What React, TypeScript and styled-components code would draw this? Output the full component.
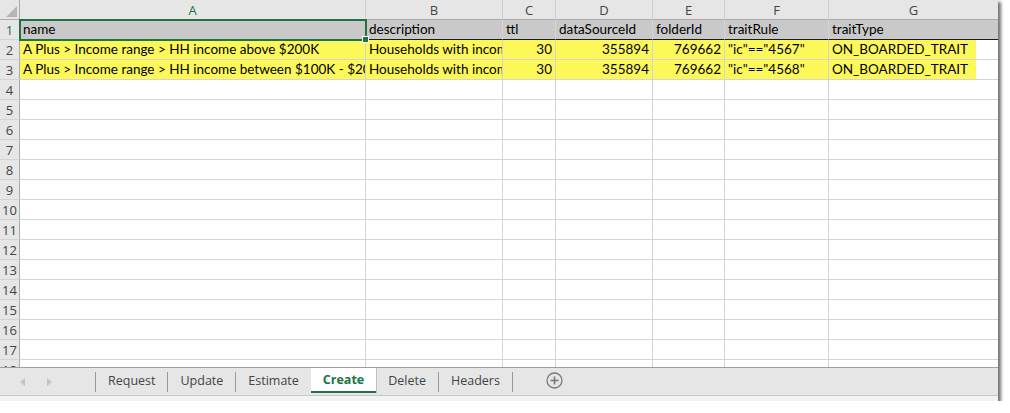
import React from "react";
import styled, { createGlobalStyle, css } from "styled-components";

const GlobalStyle = createGlobalStyle`
  html, body { margin: 0; padding: 0; background: #ffffff; }
  body { font-family: Lato, "Liberation Sans", sans-serif; }
`;

const GRID = "20px 346px 137px 53px 97px 72px 104px 169px";

const Sheet = styled.div`
  position: relative;
  width: 998px;
  height: 401px;
  display: flex;
  flex-direction: column;
  background: #ffffff;
  box-shadow: 3px 2px 3px rgba(0, 0, 0, 0.55);
  overflow: hidden;
`;

const GridArea = styled.div`
  position: relative;
  height: 367px;
  overflow: hidden;
  flex: none;
`;

const Row = styled.div`
  display: grid;
  grid-template-columns: ${GRID};
  height: 20px;
`;

const ColHead = styled.div<{ $active?: boolean }>`
  box-sizing: border-box;
  height: 20px;
  background: #e6e6e6;
  border-right: 1px solid #cdcdcd;
  border-bottom: 1px solid #ababab;
  display: flex;
  align-items: center;
  justify-content: center;
  font-family: "Open Sans", "Noto Sans", sans-serif;
  font-size: 13px;
  color: ${(p) => (p.$active ? "#217346" : "#444444")};
  &:last-child { border-right: none; }
`;

const Corner = styled.div`
  box-sizing: border-box;
  height: 20px;
  background: #e6e6e6;
  border-right: 1px solid #ababab;
  border-bottom: 1px solid #ababab;
  display: flex;
  align-items: flex-end;
  justify-content: flex-end;
  padding: 0 2px 2px 0;
`;

const RowHead = styled.div<{ $active?: boolean }>`
  box-sizing: border-box;
  background: #e6e6e6;
  border-right: 1px solid #ababab;
  border-bottom: 1px solid #d4d4d4;
  display: flex;
  align-items: center;
  justify-content: center;
  font-family: "Open Sans", "Noto Sans", sans-serif;
  font-size: 13px;
  color: ${(p) => (p.$active ? "#217346" : "#444444")};
`;

type Fill = "none" | "title" | "yellow";

const Cell = styled.div<{ $fill?: Fill; $right?: boolean; $dark?: boolean; $fillTo?: number }>`
  box-sizing: border-box;
  border-right: 1px solid #d4d4d4;
  border-bottom: 1px solid ${(p) => (p.$dark ? "#1a1a1a" : "#d4d4d4")};
  padding: 0 3px;
  font-size: 13.5px;
  line-height: 19px;
  color: #000000;
  white-space: nowrap;
  overflow: hidden;
  text-align: ${(p) => (p.$right ? "right" : "left")};
  ${(p) =>
    p.$fill === "title" &&
    css`
      background: #c9c9c9;
    `}
  ${(p) =>
    p.$fill === "yellow" &&
    (p.$fillTo
      ? css`
          background: linear-gradient(to right, #fdf859 ${p.$fillTo}px, #ffffff ${p.$fillTo}px);
        `
      : css`
          background: #fdf859;
        `)}
  &:last-child { border-right: none; }
`;

const Selection = styled.div`
  position: absolute;
  left: 19px;
  top: 19px;
  width: 348px;
  height: 22px;
  box-sizing: border-box;
  border: 2px solid #217346;
  pointer-events: none;
`;

const Handle = styled.div`
  position: absolute;
  right: -4px;
  bottom: -4px;
  width: 5px;
  height: 5px;
  background: #217346;
  border: 1px solid #ffffff;
`;

const TabBar = styled.div`
  box-sizing: border-box;
  height: 29px;
  flex: none;
  background: #e6e6e6;
  border-top: 1px solid #9f9f9f;
  border-bottom: 1px solid #c8c8c8;
  display: flex;
  align-items: stretch;
  font-family: "Open Sans", "Noto Sans", sans-serif;
  font-size: 12.5px;
`;

const BottomStrip = styled.div`
  flex: 1;
  background: #f3f3f3;
`;

const Nav = styled.div`
  width: 95px;
  display: flex;
  align-items: center;
  padding-left: 20px;
  gap: 22px;
  box-sizing: border-box;
`;

const Arrow = styled.span<{ $dir: "left" | "right" }>`
  width: 0;
  height: 0;
  border-top: 4px solid transparent;
  border-bottom: 4px solid transparent;
  ${(p) =>
    p.$dir === "left"
      ? css`border-right: 5px solid #c4c4c4;`
      : css`border-left: 5px solid #c4c4c4;`}
`;

const Sep = styled.span`
  width: 1px;
  align-self: center;
  height: 20px;
  background: #9a9a9a;
`;

const Tab = styled.div<{ $active?: boolean }>`
  display: flex;
  align-items: center;
  padding: 0 12px 2px;
  color: #444444;
  box-sizing: border-box;
  ${(p) =>
    p.$active &&
    css`
      background: #ffffff;
      color: #217346;
      font-weight: 700;
      border-bottom: 2px solid #217346;
      margin-bottom: 2px;
      box-shadow: 1px 0 0 #c0c0c0;
      padding-bottom: 0;
    `}
`;

const AddButton = styled.div`
  display: flex;
  align-items: center;
  margin-left: 33px;
  padding-bottom: 2px;
`;

const cols = ["A", "B", "C", "D", "E", "F", "G"];

type Data = { text: string; right?: boolean }[];

const titles = ["name", "description", "ttl", "dataSourceId", "folderId", "traitRule", "traitType"];

const rows: Data[] = [
  [
    { text: "A Plus > Income range > HH income above $200K" },
    { text: "Households with income above $200K" },
    { text: "30", right: true },
    { text: "355894", right: true },
    { text: "769662", right: true },
    { text: '"ic"=="4567"' },
    { text: "ON_BOARDED_TRAIT" },
  ],
  [
    { text: "A Plus > Income range > HH income between $100K - $200K" },
    { text: "Households with income between $100K - $200K" },
    { text: "30", right: true },
    { text: "355894", right: true },
    { text: "769662", right: true },
    { text: '"ic"=="4568"' },
    { text: "ON_BOARDED_TRAIT" },
  ],
];

const tabs = ["Request", "Update", "Estimate", "Create", "Delete", "Headers"];
const ACTIVE = "Create";

export default function App() {
  const emptyRows = Array.from({ length: 15 }, (_, i) => i + 4);
  return (
    <>
      <GlobalStyle />
      <Sheet>
        <GridArea>
          <Row>
            <Corner>
              <svg width="11" height="11" viewBox="0 0 11 11">
                <polygon points="11,0 11,11 0,11" fill="#b5b5b5" />
              </svg>
            </Corner>
            {cols.map((c) => (
              <ColHead key={c} $active={c === "A"}>
                {c}
              </ColHead>
            ))}
          </Row>
          <Row>
            <RowHead $active>1</RowHead>
            {titles.map((t) => (
              <Cell key={t} $fill="title" $dark>
                {t}
              </Cell>
            ))}
          </Row>
          {rows.map((r, i) => (
            <Row key={i}>
              <RowHead>{i + 2}</RowHead>
              {r.map((c, j) => (
                <Cell key={j} $fill="yellow" $right={c.right} $fillTo={j === 6 ? 147 : undefined}>
                  {c.text}
                </Cell>
              ))}
            </Row>
          ))}
          {emptyRows.map((n) => (
            <Row key={n}>
              <RowHead>{n}</RowHead>
              {cols.map((c) => (
                <Cell key={c} />
              ))}
            </Row>
          ))}
          <Selection>
            <Handle />
          </Selection>
        </GridArea>
        <TabBar>
          <Nav>
            <Arrow $dir="left" />
            <Arrow $dir="right" />
          </Nav>
          <Sep />
          {tabs.map((t, i) => {
            const next = tabs[i + 1];
            const showSep = t !== ACTIVE && next !== ACTIVE;
            return (
              <React.Fragment key={t}>
                <Tab $active={t === ACTIVE}>{t}</Tab>
                {showSep && <Sep />}
              </React.Fragment>
            );
          })}
          <AddButton>
            <svg width="17" height="17" viewBox="0 0 17 17">
              <circle cx="8.5" cy="8.5" r="7.5" fill="none" stroke="#7a7a7a" strokeWidth="1.3" />
              <line x1="8.5" y1="4.5" x2="8.5" y2="12.5" stroke="#7a7a7a" strokeWidth="1.6" />
              <line x1="4.5" y1="8.5" x2="12.5" y2="8.5" stroke="#7a7a7a" strokeWidth="1.6" />
            </svg>
          </AddButton>
        </TabBar>
        <BottomStrip />
      </Sheet>
    </>
  );
}
